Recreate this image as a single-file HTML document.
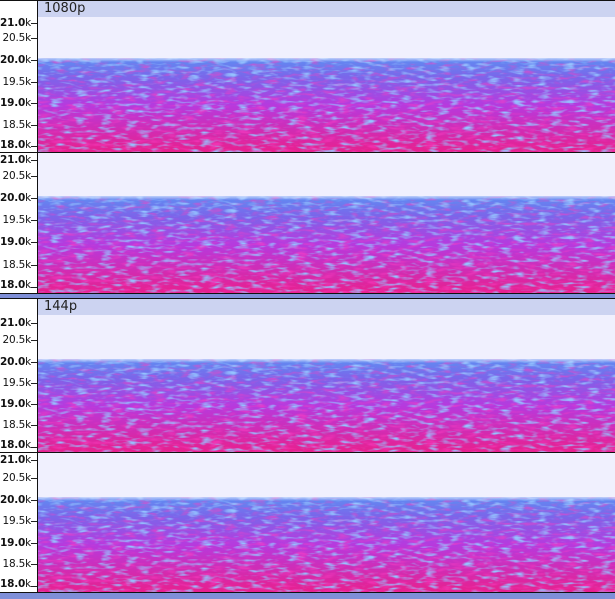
<!DOCTYPE html>
<html><head><meta charset="utf-8"><style>
*{margin:0;padding:0;box-sizing:border-box}
body{width:615px;height:599px;background:#fff;position:relative;overflow:hidden;font-family:"DejaVu Sans","Liberation Sans",sans-serif}
.ax{position:absolute;left:0;width:37px;background:#fff}
.lb{position:absolute;right:584px;font-size:10.5px;line-height:12px;color:#111;white-space:nowrap;transform:translateY(-6px);letter-spacing:-0.2px}
.lb b{font-weight:bold}
.tk{position:absolute;left:31px;width:6px;height:1px;background:#222}
.pan{position:absolute;left:37px;width:578px;border-left:1px solid #111;overflow:hidden;background:#f0f0fe}
.pan svg{position:absolute;left:0;top:0}
.title{position:absolute;left:37px;width:578px;height:16px;background:#ccd3f1;border-left:1px solid #111;font-size:13px;padding-left:6px;line-height:16px;color:#222}
.hl{position:absolute;left:0;width:615px;height:1px;background:#111}
.band{position:absolute;left:0;width:615px;background:#7f8fd8}
</style></head><body>
<svg width="0" height="0" style="position:absolute">
<defs>
<linearGradient id="g" x1="0" y1="0" x2="0" y2="1">
<stop offset="0" stop-color="#5e8ef2"/><stop offset="0.2" stop-color="#7a66ea"/><stop offset="0.5" stop-color="#b63ade"/><stop offset="1" stop-color="#e8208e"/>
</linearGradient>
<filter id="n" x="0" y="0" width="100%" height="100%">
<feTurbulence type="fractalNoise" baseFrequency="0.08 0.3" numOctaves="2" seed="3"/>
<feColorMatrix values="0 0 0 0 0.3  0 0 0 0 0.55  0 0 0 0 1  3 0 0 0 -1.5"/>
</filter>
<filter id="n2" x="0" y="0" width="100%" height="100%">
<feTurbulence type="fractalNoise" baseFrequency="0.07 0.3" numOctaves="2" seed="9"/>
<feColorMatrix values="0 0 0 0 0.98  0 0 0 0 0.05  0 0 0 0 0.55  3 0 0 0 -1.5"/>
</filter>
<linearGradient id="e" x1="0" y1="0" x2="0" y2="1"><stop offset="0" stop-color="#f0f0fe" stop-opacity="1"/><stop offset="1" stop-color="#f0f0fe" stop-opacity="0"/></linearGradient>
</defs></svg>

<div class="hl" style="top:0"></div>
<div class="title" style="top:1px">1080p</div>
<div class="pan" style="top:17px;height:135px"><svg width="578" height="135"><rect x="0" y="41" width="578" height="94" fill="url(#g)"/><rect x="0" y="41" width="578" height="94" filter="url(#n2)" opacity=".6"/><rect x="0" y="41" width="578" height="94" filter="url(#n)"/><rect x="0" y="39" width="578" height="6" fill="url(#e)"/></svg></div>
<div class="hl" style="top:152px"></div>
<div class="pan" style="top:153px;height:140px"><svg width="578" height="140"><rect x="0" y="43" width="578" height="97" fill="url(#g)"/><rect x="0" y="43" width="578" height="97" filter="url(#n2)" opacity=".6"/><rect x="0" y="43" width="578" height="97" filter="url(#n)"/><rect x="0" y="41" width="578" height="6" fill="url(#e)"/></svg></div>
<div class="hl" style="top:293px"></div>
<div class="band" style="top:294px;height:4px"></div>
<div class="hl" style="top:298px"></div>
<div class="title" style="top:299px">144p</div>
<div class="pan" style="top:315px;height:137px"><svg width="578" height="137"><rect x="0" y="44" width="578" height="93" fill="url(#g)"/><rect x="0" y="44" width="578" height="93" filter="url(#n2)" opacity=".6"/><rect x="0" y="44" width="578" height="93" filter="url(#n)"/><rect x="0" y="42" width="578" height="6" fill="url(#e)"/></svg></div>
<div class="hl" style="top:452px"></div>
<div class="pan" style="top:453px;height:139px"><svg width="578" height="139"><rect x="0" y="44" width="578" height="95" fill="url(#g)"/><rect x="0" y="44" width="578" height="95" filter="url(#n2)" opacity=".6"/><rect x="0" y="44" width="578" height="95" filter="url(#n)"/><rect x="0" y="42" width="578" height="6" fill="url(#e)"/></svg></div>
<div class="hl" style="top:592px"></div>
<div class="band" style="top:593px;height:6px"></div>

<div class="ax" style="top:1px;height:151px"></div>
<div class="ax" style="top:299px;height:153px"></div>

<div class="lb" style="top:23px"><b>21.0</b>k</div><div class="tk" style="top:23px"></div>
<div class="lb" style="top:38px">20.5k</div><div class="tk" style="top:38px"></div>
<div class="lb" style="top:60px"><b>20.0</b>k</div><div class="tk" style="top:60px"></div>
<div class="lb" style="top:82px">19.5k</div><div class="tk" style="top:82px"></div>
<div class="lb" style="top:103px"><b>19.0</b>k</div><div class="tk" style="top:103px"></div>
<div class="lb" style="top:125px">18.5k</div><div class="tk" style="top:125px"></div>
<div class="lb" style="top:145px"><b>18.0</b>k</div><div class="tk" style="top:146px"></div>

<div class="lb" style="top:160px"><b>21.0</b>k</div><div class="tk" style="top:160px"></div>
<div class="lb" style="top:176px">20.5k</div><div class="tk" style="top:176px"></div>
<div class="lb" style="top:198px"><b>20.0</b>k</div><div class="tk" style="top:198px"></div>
<div class="lb" style="top:220px">19.5k</div><div class="tk" style="top:220px"></div>
<div class="lb" style="top:242px"><b>19.0</b>k</div><div class="tk" style="top:242px"></div>
<div class="lb" style="top:265px">18.5k</div><div class="tk" style="top:265px"></div>
<div class="lb" style="top:285px"><b>18.0</b>k</div><div class="tk" style="top:287px"></div>

<div class="lb" style="top:323px"><b>21.0</b>k</div><div class="tk" style="top:323px"></div>
<div class="lb" style="top:340px">20.5k</div><div class="tk" style="top:340px"></div>
<div class="lb" style="top:362px"><b>20.0</b>k</div><div class="tk" style="top:362px"></div>
<div class="lb" style="top:383px">19.5k</div><div class="tk" style="top:383px"></div>
<div class="lb" style="top:404px"><b>19.0</b>k</div><div class="tk" style="top:404px"></div>
<div class="lb" style="top:425px">18.5k</div><div class="tk" style="top:425px"></div>
<div class="lb" style="top:445px"><b>18.0</b>k</div><div class="tk" style="top:447px"></div>

<div class="lb" style="top:460px"><b>21.0</b>k</div><div class="tk" style="top:460px"></div>
<div class="lb" style="top:478px">20.5k</div><div class="tk" style="top:478px"></div>
<div class="lb" style="top:500px"><b>20.0</b>k</div><div class="tk" style="top:500px"></div>
<div class="lb" style="top:521px">19.5k</div><div class="tk" style="top:521px"></div>
<div class="lb" style="top:543px"><b>19.0</b>k</div><div class="tk" style="top:543px"></div>
<div class="lb" style="top:564px">18.5k</div><div class="tk" style="top:564px"></div>
<div class="lb" style="top:584px"><b>18.0</b>k</div><div class="tk" style="top:586px"></div>
</body></html>
